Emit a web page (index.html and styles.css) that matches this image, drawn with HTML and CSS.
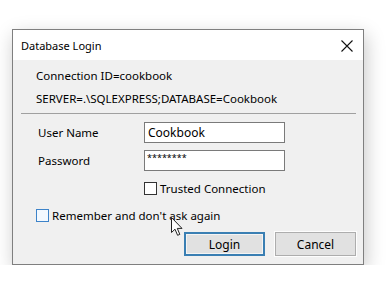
FILE: index.html
```html
<!DOCTYPE html>
<html lang="en">
<head>
  <meta charset="UTF-8" />
  <title>Database Login</title>
  <link rel="stylesheet" href="styles.css">
</head>
<body>
  <div class="dialog">
    <div class="titlebar">
      <span class="title">Database Login</span>
      <svg class="close" width="12" height="12" viewBox="0 0 12 12">
        <path d="M0.5 0.5 L11.5 11.5 M11.5 0.5 L0.5 11.5" stroke="#111" stroke-width="1.1" fill="none"/>
      </svg>
    </div>
    <div class="content">
      <p class="info">Connection ID=cookbook</p>
      <p class="info">SERVER=.\SQLEXPRESS;DATABASE=Cookbook</p>
      <div class="separator"></div>
      <div class="form">
        <label class="label">User Name</label>
        <div class="field">Cookbook</div>
        <label class="label">Password</label>
        <div class="field password">********</div>
        <div></div>
        <div class="check"><span class="box"></span>Trusted Connection</div>
      </div>
      <div class="check remember"><span class="box hover"></span>Remember and don't ask again</div>
      <div class="buttons">
        <button class="btn default">Login</button>
        <button class="btn">Cancel</button>
      </div>
    </div>
    <svg class="cursor" width="13" height="20" viewBox="0 0 13 20">
      <path d="M0.5 0.5 L0.5 15.5 L4 12.2 L6.6 18.3 L8.8 17.4 L6.3 11.4 L11 11.4 Z" fill="#fff" stroke="#222" stroke-width="1" stroke-linejoin="round"/>
    </svg>
  </div>
</body>
</html>
```

FILE: styles.css
```css
html, body {
  margin: 0;
  padding: 0;
  background-color: #fff;
  font-family: 'Noto Sans', 'Open Sans', sans-serif;
  font-size: 11.5px;
  color: #000;
}
body {
  padding: 29px 0 0 12px;
}
.dialog {
  position: relative;
  width: 350px;
  border: 1px solid #7f7f7f;
  background-color: #f0f0f0;
  box-shadow: 2px 6px 18px rgba(0, 0, 0, 0.22);
}
.titlebar {
  height: 30px;
  background-color: #fff;
  display: flex;
  align-items: center;
  justify-content: space-between;
  padding: 0 8px 0 8px;
}
.title {
  font-size: 11px;
  margin-top: 1px;
}
.close {
  margin-right: 2px;
  margin-top: 1px;
}
.content {
  padding: 4px 7px 8px 0;
}
.info {
  margin: 0;
  padding-left: 23px;
  height: 23px;
  line-height: 23px;
}
.separator {
  margin: 3px 0 0 8px;
  border-top: 1px solid #a0a0a0;
}
.form {
  display: grid;
  grid-template-columns: 106px 141px;
  row-gap: 7px;
  padding: 8px 0 0 25px;
  align-items: center;
}
.label {
  line-height: 21px;
}
.field {
  height: 21px;
  box-sizing: border-box;
  border: 1px solid #7a7a7a;
  background-color: #fff;
  padding: 0 3px;
  line-height: 19px;
  font-size: 12px;
}
.field.password {
  font-size: 9px;
  line-height: 14px;
  padding-left: 2px;
}
.check {
  display: flex;
  align-items: center;
  height: 13px;
  margin-top: 4px;
  white-space: nowrap;
}
.box {
  width: 13px;
  height: 13px;
  box-sizing: border-box;
  border: 1px solid #333;
  background-color: #fff;
  margin-right: 3px;
}
.box.hover {
  border-color: #3d83c9;
  background-color: #f3f9ff;
}
.remember {
  margin: 14px 0 0 23px;
}
.buttons {
  display: flex;
  justify-content: flex-end;
  gap: 10px;
  margin-top: 10px;
}
.btn {
  width: 81px;
  height: 24px;
  box-sizing: border-box;
  font-family: 'Noto Sans', 'Open Sans', sans-serif;
  font-size: 12px;
  background-color: #e1e1e1;
  border: 1px solid #adadad;
  outline: 1px solid #fdfdfd;
  padding: 0;
  color: #000;
}
.btn.default {
  border: 2px solid #3a7fb3;
  outline: none;
  background-color: #e1e1e1;
  box-shadow: inset 0 0 0 1px #f4f4f4;
}
.cursor {
  position: absolute;
  left: 158px;
  top: 187px;
}
```
